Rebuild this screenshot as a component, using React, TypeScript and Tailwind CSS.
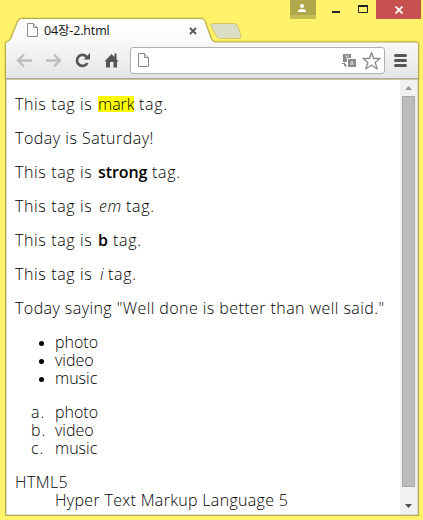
import React from 'react';

const media = ['photo', 'video', 'music'];

const PageIcon = () => (
  <svg width="12" height="15" viewBox="0 0 12 15" fill="#fafafa" stroke="#8b8b8b">
    <path d="M.5.5h6l4 4v9H.5z" />
    <path d="M6.500 .5v4h4" fill="#ddd" />
  </svg>
);

const WindowFrame = () => (
  <svg className="absolute inset-0" width="423" height="80" viewBox="0 0 423 80">
    <defs>
      <linearGradient id="chrome" x1="0" y1="19" x2="0" y2="78" gradientUnits="userSpaceOnUse">
        <stop offset="0" stopColor="#ffffff" />
        <stop offset="0.4" stopColor="#f8f8f8" />
        <stop offset="1" stopColor="#e4e4e4" />
      </linearGradient>
    </defs>
    <path
      d="M5.500 80V44q0-2 2-2.500q2-.5 3-2.500l7-17q1.500-3.500 4-3.500H201q3 0 4 3l6 16.500q1.500 4 4 4H416q2.500 0 2.500 2.500V80z"
      fill="url(#chrome)"
      stroke="#d9cc43"
      strokeWidth="3"
      strokeOpacity=".5"
    />
    <path
      d="M5.500 80V44q0-2 2-2.500q2-.5 3-2.500l7-17q1.500-3.500 4-3.500H201q3 0 4 3l6 16.500q1.500 4 4 4H416q2.500 0 2.500 2.500V80z"
      fill="url(#chrome)"
      stroke="#b6aa4b"
    />
    <path
      d="M212 23.500h22q3 0 4 3l3 9q1 3-2 3h-19q-3 0-4-3l-5-9q-1-3 1-3z"
      fill="#dbddc4"
      stroke="#d4ca60"
    />
    <path d="M6 78.500h412" stroke="#a5a5a5" />
  </svg>
);

const TitleBar = () => (
  <div className="relative flex h-[43px] items-start">
    <div className="flex h-[43px] w-[212px] items-center pt-[19px] pl-[27px]">
      <div className="-mt-[1px] flex items-center">
        <PageIcon />
        <span className="ml-[5px] w-[142px] text-[12.500px] leading-4 tracking-[-0.15px] text-[#111]">04장-2.html</span>
        <svg className="ml-[3px]" width="8" height="8" viewBox="0 0 8 8" stroke="#555" strokeWidth="1.800">
          <path d="M1 1l6 6M7 1L1 7" />
        </svg>
      </div>
    </div>
    <div className="ml-[78px] h-[19px] w-[26px] border-b-4 border-[#c5bc50] bg-[#b0a64a]">
      <svg width="26" height="15" fill="#fff">
        <circle cx="12" cy="6" r="2" />
        <path d="M8 12V10.500q1-1.500 4-1.500t4 1.500V12z" />
      </svg>
    </div>
    <svg className="ml-[10px]" width="50" height="19" fill="none" stroke="#222">
      <path d="M6 12h8" strokeWidth="2" />
      <path d="M32.500 5v7.500h9V5" />
      <path d="M32 6h10" strokeWidth="2" />
    </svg>
    <div className="flex h-[19px] w-[45px] items-center justify-center bg-[#c75050]">
      <svg width="8" height="8" viewBox="0 0 8 8" stroke="#fff" strokeWidth="1.800">
        <path d="M.5.5l7 7M7.500.5l-7 7" />
      </svg>
    </div>
  </div>
);

const Toolbar = () => (
  <div className="relative flex h-[36px] pt-[4px] pl-[16px]">
    <svg width="104" height="27" viewBox="16 47 104 27" fill="none">
      <g stroke="#bdbdbd" strokeWidth="2.300">
        <path d="M32 60.500H19M24 54.500l-6 6 6 6" />
        <path d="M46 60.500h13M54 54.500l6 6-6 6" />
      </g>
      <path d="M86.800 57a5.500 5.500 0 1 0 .6 6" stroke="#555" strokeWidth="2.700" />
      <path d="M90 53v6.500h-6.500z" fill="#555" />
      <path d="M104.500 61.500l7-7.500 3 3v-3.500h2V59l2 2.500h-1.500v6h-3.500V62h-3.500v5.500H106v-6z" fill="#555" />
    </svg>
    <div className="ml-[10px] flex h-[27px] w-[255px] items-center rounded-[3px] border border-[#b0b0b0] bg-white pl-[7px]">
      <PageIcon />
      <svg className="ml-[192px]" width="15" height="15" viewBox="0 0 15 15">
        <path d="M1 1h8v4H5v4H1z" fill="#8b8b8b" />
        <path d="M6 6h8v8H6z" fill="#8b8b8b" />
        <path d="M3 3h4M5 3v3M8.500 12l1.500-4 1.500 4M9 11h2" stroke="#ddd" fill="none" strokeWidth=".8" />
        <path d="M0 10.500h3M2.500 9.500v3h2M3.500 11v3" stroke="#888" fill="none" />
      </svg>
      <svg className="ml-[5px]" width="20" height="20" viewBox="0 0 20 20">
        <path
          d="M9.500 1.500l2.200 6h6.300l-4.900 4 2.200 6.500-5.800-3.800-5.800 3.800 2.200-6.500-4.900-4h6.500z"
          fill="#fff"
          stroke="#8b8b8b"
          strokeWidth="1.300"
          strokeLinejoin="round"
        />
      </svg>
    </div>
    <svg className="ml-[9px]" width="13" height="27" stroke="#555" strokeWidth="3" strokeLinecap="round">
      <path d="M1.500 8.500h10M1.500 13.500h10M1.500 18.500h10" />
    </svg>
  </div>
);

const Scrollbar = () => (
  <div className="flex w-[17px] flex-col items-center bg-[#f1f1f1]">
    <svg width="17" height="17" fill="#999">
      <path d="M5 11l3.500-4 3.500 4z" />
    </svg>
    <div className="h-[391px] w-[13px] border border-[#a8a8a8] bg-[#bcbcbc]" />
    <svg width="17" height="27" fill="#505050">
      <path d="M5 17h7l-3.500 4z" />
    </svg>
  </div>
);

const Lead = () => <span className="w-[83px] tracking-[0.62px] whitespace-pre">This tag is </span>;

const Tail = () => <span className="ml-[5px] tracking-[0.7px]">tag.</span>;

const Content = () => (
  <div className="flex-1 pt-4 pl-2 text-[16px] leading-[18px] font-light whitespace-nowrap text-black">
    <div className="flex flex-col gap-4">
      <p className="flex">
        <Lead />
        <mark className="mt-px h-4 w-[36px] bg-[#ff0] leading-4 text-black">mark</mark>
        <Tail />
      </p>
      <p className="tracking-[0.5px]">Today is Saturday!</p>
      <p className="flex">
        <Lead />
        <strong className="w-[49px] font-semibold tracking-[-0.1px]">strong</strong>
        <Tail />
      </p>
      <p className="flex">
        <Lead />
        <em className="w-[23px] pl-px tracking-[0.5px]">em</em>
        <Tail />
      </p>
      <p className="flex">
        <Lead />
        <b className="w-[10px] font-semibold">b</b>
        <Tail />
      </p>
      <p className="flex">
        <Lead />
        <i className="w-[5px] pl-[2px]">i</i>
        <Tail />
      </p>
      <p className="tracking-[0.43px]">Today saying "Well done is better than well said."</p>
    </div>
    <ul className="mt-4">
      {media.map((item) => (
        <li key={item} className="flex items-center">
          <span className="mt-[3px] mr-[11px] ml-[24px] size-[5px] rounded-full bg-black" />
          {item}
        </li>
      ))}
    </ul>
    <ol className="mt-4">
      {media.map((item, i) => (
        <li key={item} className="flex">
          <span className="mr-4 w-[24px] pl-4 tracking-[1px]">{'abc'[i]}.</span>
          {item}
        </li>
      ))}
    </ol>
    <dl className="mt-4">
      <dt className="tracking-[0.4px]">HTML5</dt>
      <dd className="pl-10 tracking-[0.32px]">Hyper Text Markup Language 5</dd>
    </dl>
  </div>
);

const App = () => (
  <div className="relative h-[520px] w-[423px] overflow-hidden bg-[#fff36b] font-['Open_Sans','Noto_Sans_CJK_KR',sans-serif]">
    <WindowFrame />
    <TitleBar />
    <Toolbar />
    <div className="ml-[5px] flex h-[437px] w-[414px] border-x border-b border-[#b6aa4b] bg-white">
      <div className="flex w-full border-x border-b border-[#d9d9d9]">
        <Content />
        <Scrollbar />
      </div>
    </div>
  </div>
);

export default App;
